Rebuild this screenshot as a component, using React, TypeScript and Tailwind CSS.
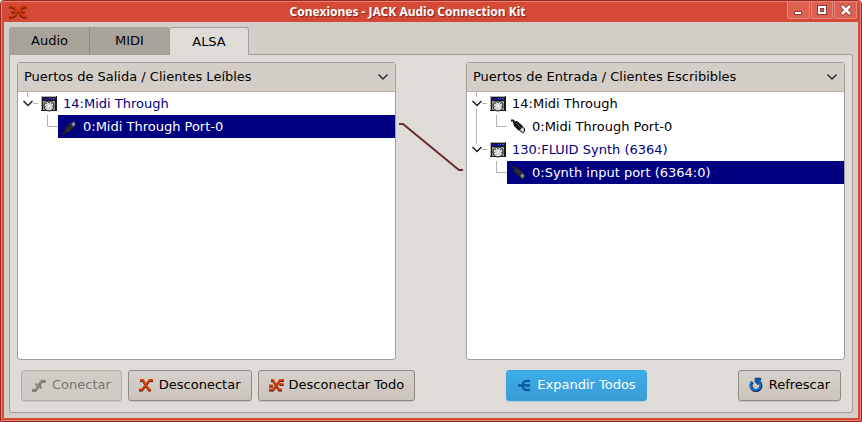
import React, { useState } from "react";

function ShuffleIcon() {
  const shape = "M0 2.500h3Q7 3 7.500 7.500Q7 12 3 12.500H0M2 7.500h14M18 2.500h-3Q11 3 10.500 7.500Q11 12 15 12.500h3";
  return (
    <svg width="18" height="16" viewBox="0 0 18 16" fill="none" aria-hidden="true">
      <path d={shape} stroke="#5c1408" strokeWidth="2" transform="translate(0 1)" />
      <path d={shape} stroke="#c63a08" strokeWidth="2" />
    </svg>
  );
}

function ConnectIcon() {
  return (
    <svg width="16" height="16" viewBox="0 0 16 16" fill="none" aria-hidden="true">
      <path d="M0 13.500h3.500l6-9h4" stroke="#6f6d68" strokeWidth="2.500" />
      <path d="M0 12.500h3.500l6-9h4" stroke="#94918b" strokeWidth="1.500" />
      <path d="M3 7.500h4.500M8.500 8v4" stroke="#85827c" strokeWidth="2" />
    </svg>
  );
}

function DisconnectIcon() {
  const shape = "M0 12.500h3L10.500 3H14M1 3h3l6 9.500h2";
  return (
    <svg width="16" height="16" viewBox="0 0 16 16" fill="none" aria-hidden="true">
      <path d={shape} stroke="#5a1408" strokeWidth="2" transform="translate(0 1)" />
      <path d={shape} stroke="#d8400f" strokeWidth="2" />
    </svg>
  );
}

function DisconnectAllIcon() {
  const shape = "M0 8.500h4M0 12.500h4L11 3h4M10.500 7h4M2 3h2l6 9.500h3";
  return (
    <svg width="16" height="16" viewBox="0 0 16 16" fill="none" aria-hidden="true">
      <path d={shape} stroke="#5a1408" strokeWidth="2" transform="translate(0 1)" />
      <path d={shape} stroke="#d8400f" strokeWidth="2" />
    </svg>
  );
}

function ExpandIcon() {
  const shape = "M13 3.500H9Q6 4 5.500 8Q6 12 9 12.500h4M1 8h12";
  return (
    <svg width="16" height="16" viewBox="0 0 16 16" fill="none" aria-hidden="true">
      <path d={shape} stroke="#0b3c74" strokeWidth="2" transform="translate(0 .5)" />
      <path d={shape} stroke="#0b66b4" strokeWidth="1.500" />
    </svg>
  );
}

function RefreshIcon() {
  return (
    <svg width="16" height="16" viewBox="0 0 16 16" fill="none" aria-hidden="true">
      <path d="M3.500 4.500a5 5 0 1 0 7 0" stroke="#0a2b5c" strokeWidth="3" transform="translate(0 .5)" />
      <path d="M3 4.500a5 5 0 1 0 7 0" stroke="#1272cf" strokeWidth="2" />
      <path d="M6 1h6v2l-2 1-1 4-3-3z" fill="#0c5cb4" stroke="#0a2b5c" strokeWidth=".5" />
    </svg>
  );
}

function ClientIcon() {
  return (
    <svg width="16" height="16" viewBox="0 0 16 16" aria-hidden="true">
      <path fill="#1a1a1a" d="M0 0h16v15H0z" />
      <path fill="#b0b0b0" d="M0 0h15v1H0zM0 0h1v14H0z" />
      <path fill="#989898" d="M2 5h12v9H2z" />
      <path fill="#15157c" d="M2 2h12v2H2z" />
      <path fill="#4250ff" d="M8 2h1v1H8zM10 2h1v1h-1zM12 2h2v1h-2z" />
      <circle cx="8" cy="10" r="5" fill="#d4d4d4" stroke="#1c1c1c" />
      <path fill="#555" d="M7 6h2v1H7zM5 7h1v1H5zM10 7h1v1h-1zM4 10h1v1H4zM11 10h1v1h-1z" />
      <path fill="#f4f4f4" d="M7 9h2v2H7z" />
    </svg>
  );
}

function PlugIcon({ output, selected }: { output: boolean; selected: boolean }) {
  const body = selected ? "#22222f" : "#141414";
  const grip = selected ? "#4a4b66" : "#6c6c6c";
  const metal = selected ? "#666988" : "#b4b4b4";
  const shine = selected ? "#a3a5bf" : "#f4f4f4";
  return (
    <svg width="16" height="16" viewBox="0 0 16 16" fill="none" aria-hidden="true">
      <g transform={output ? "translate(0 16) scale(1 -1)" : undefined}>
        <path d="M0 1.500h2L4 4" stroke={body} strokeWidth="2" />
        <path d="M2 3l4-1 6 5-4 5-5-5z" fill={body} />
        <path d="M5 4l4.500 4.500" stroke={grip} />
        <path d="M8.500 11l2.500-3.500 2.500 2v3l-2 1.500z" fill={metal} stroke={body} />
        <path d="M10.500 10l1.500 1.500" stroke={shine} strokeWidth="1.500" />
      </g>
    </svg>
  );
}

function RootBranch({ before, after }: { before: boolean; after: boolean }) {
  return (
    <svg width="20" height="23" viewBox="0 0 20 23" fill="none" aria-hidden="true" className="shrink-0">
      <path d={before ? "M9.500 0v6M15 11.500h5" : "M9.500 0v5M15 11.500h5"} stroke="#b4b2af" />
      {after && <path d="M9.500 17v6" stroke="#b4b2af" />}
      <path d="M5.500 9l4.500 4.500L14.500 9" stroke="#1f1f1f" strokeWidth="1.500" />
    </svg>
  );
}

function ChildBranch({ through }: { through: boolean }) {
  return (
    <svg width="40" height="23" viewBox="0 0 40 23" fill="none" aria-hidden="true" className="shrink-0">
      <path d="M29.500 0v11.500H40" stroke="#b4b2af" />
      {through && <path d="M9.500 0v23" stroke="#b4b2af" />}
    </svg>
  );
}

type Client = { name: string; port: string; active: boolean };

function PortTree({ title, clients, output }: { title: string; clients: Client[]; output: boolean }) {
  return (
    <section className="flex min-w-0 flex-1 flex-col rounded-[3px] border border-[#a29f9a] bg-white">
      <button type="button" className="flex h-[29px] items-center justify-between border-b border-[#b5b1ab] bg-[#d3cec7] px-1.5 text-left">
        <span>{title}</span>
        <svg width="12" height="8" viewBox="0 0 12 8" fill="none" aria-hidden="true">
          <path d="M1.500 1.500L6 6l4.500-4.500" stroke="#2b2b2b" strokeWidth="1.500" />
        </svg>
      </button>
      <ul>
        {clients.map((client, i) => {
          const more = i < clients.length - 1;
          return (
            <li key={client.name}>
              <div className="flex h-[23px] items-center">
                <RootBranch before={i > 0} after={more} />
                <div className={client.active ? "flex items-center gap-1.5 pl-[3px] text-[#000080]" : "flex items-center gap-1.5 pl-[3px]"}>
                  <ClientIcon />
                  <span>{client.name}</span>
                </div>
              </div>
              <ul>
                <li className="flex h-[23px] items-center">
                  <ChildBranch through={more} />
                  <div className={client.active ? "flex h-full flex-1 items-center gap-[5px] bg-[#000080] pl-1 text-white" : "flex h-full flex-1 items-center gap-[5px] pl-1"}>
                    <PlugIcon output={output} selected={client.active} />
                    <span>{client.port}</span>
                  </div>
                </li>
              </ul>
            </li>
          );
        })}
      </ul>
    </section>
  );
}

const actionClass =
  "flex h-[31px] items-center gap-1 rounded-[3px] border border-[#8f8c87] bg-linear-to-b from-[#d6d1ca] to-[#cac4bc] px-2.5 pb-[2px] whitespace-nowrap shadow-[0_1px_0_#c4c0ba]";

const tabs = ["Audio", "MIDI", "ALSA"];

export default function App() {
  const [tab, setTab] = useState("ALSA");
  return (
    <div className="flex min-h-screen flex-col rounded-t-[4px] border border-[#98291d] bg-[#d64937] font-['DejaVu_Sans',sans-serif] text-[13px] leading-4 text-black">
      <div className="flex flex-1 flex-col rounded-t-[3px] border border-[#e58376] px-[2px] pb-[2px]">
        <header className="flex h-5 items-start pr-px">
          <div className="flex w-6 pt-[2px] pl-[5px]">
            <ShuffleIcon />
          </div>
          <h1 className="flex-1 pt-[2px] text-center font-['Noto_Sans',sans-serif] text-[12px] font-bold text-white [text-shadow:1px_1px_1px_#7c2418]">
            Conexiones - JACK Audio Connection Kit
          </h1>
          <div className="flex w-[70px] gap-px">
            {["Minimizar", "Maximizar", "Cerrar"].map((label, i) => (
              <button key={label} type="button" aria-label={label} className="flex h-[17px] flex-1 items-center justify-center rounded-b-[2px] border border-t-0 border-[#e8897d] bg-[#dc6152]">
                <svg width="12" height="12" viewBox="0 0 12 12" fill="none" aria-hidden="true">
                  {i === 0 && <path d="M2.500 7.500h7v3h-7z" fill="#fff" stroke="#8b3a30" />}
                  {i === 1 && (
                    <>
                      <path d="M3 3h6v6H3z" stroke="#8b3a30" strokeWidth="4" />
                      <path d="M3 3h6v6H3z" stroke="#fff" strokeWidth="2" />
                    </>
                  )}
                  {i === 2 && (
                    <>
                      <path d="M1.500 1.500l9 9M10.500 1.500l-9 9" stroke="#8b3a30" strokeWidth="4" />
                      <path d="M2 2l8 8M10 2l-8 8" stroke="#fff" strokeWidth="2.500" />
                    </>
                  )}
                </svg>
              </button>
            ))}
          </div>
        </header>
        <main className="flex flex-1 flex-col bg-[#d3cec7] p-[5px]">
          <div role="tablist" className="z-10 -mb-px flex">
            {tabs.map((name) => (
              <button
                key={name}
                type="button"
                role="tab"
                aria-selected={tab === name}
                onClick={() => setTab(name)}
                className={
                  tab === name
                    ? "h-7 w-20 rounded-t-[3px] border border-b-0 border-[#a29f9a] bg-[#dfdcd7]"
                    : "h-7 w-20 border-b border-l border-[#8f8c86] border-b-[#a29f9a] bg-[#a8a49c] first:rounded-tl-[3px] first:border-l-[#a8a49c]"
                }
              >
                {name}
              </button>
            ))}
          </div>
          <div role="tabpanel" className="flex flex-1 flex-col gap-2.5 rounded-b-[3px] rounded-tr-[3px] border border-[#a29f9a] bg-[#dfdcd7] px-[7px] pt-[7px] pb-[11px]">
            <div className="flex flex-1">
              <PortTree
                output
                title="Puertos de Salida / Clientes Leíbles"
                clients={[{ name: "14:Midi Through", port: "0:Midi Through Port-0", active: true }]}
              />
              <svg width="70" height="200" viewBox="0 0 70 200" fill="none" className="shrink-0" aria-hidden="true">
                <path d="M3 62h4l56 46h4" stroke="#662e30" strokeWidth="2" />
              </svg>
              <PortTree
                output={false}
                title="Puertos de Entrada / Clientes Escribibles"
                clients={[
                  { name: "14:Midi Through", port: "0:Midi Through Port-0", active: false },
                  { name: "130:FLUID Synth (6364)", port: "0:Synth input port (6364:0)", active: true },
                ]}
              />
            </div>
            <div className="flex items-center justify-between px-1">
              <div className="flex gap-1.5">
                <button type="button" disabled className="flex h-[31px] items-center gap-1 rounded-[3px] border border-[#b3afa9] bg-[#d1ccc5] px-2.5 pb-[2px] whitespace-nowrap text-[#777570] shadow-[0_1px_0_#cbc7c1]">
                  <ConnectIcon />
                  Conectar
                </button>
                <button type="button" className={actionClass}>
                  <DisconnectIcon />
                  Desconectar
                </button>
                <button type="button" className={actionClass}>
                  <DisconnectAllIcon />
                  Desconectar Todo
                </button>
              </div>
              <button type="button" className="flex h-[31px] items-center gap-1 rounded-[3px] border border-[#3ba4dd] bg-linear-to-b from-[#3daeeb] to-[#3a9bd5] px-2.5 pb-[2px] whitespace-nowrap text-white shadow-[0_1px_0_#b4c6d0]">
                <ExpandIcon />
                Expandir Todos
              </button>
              <button type="button" className={actionClass}>
                <RefreshIcon />
                Refrescar
              </button>
            </div>
          </div>
        </main>
      </div>
    </div>
  );
}
